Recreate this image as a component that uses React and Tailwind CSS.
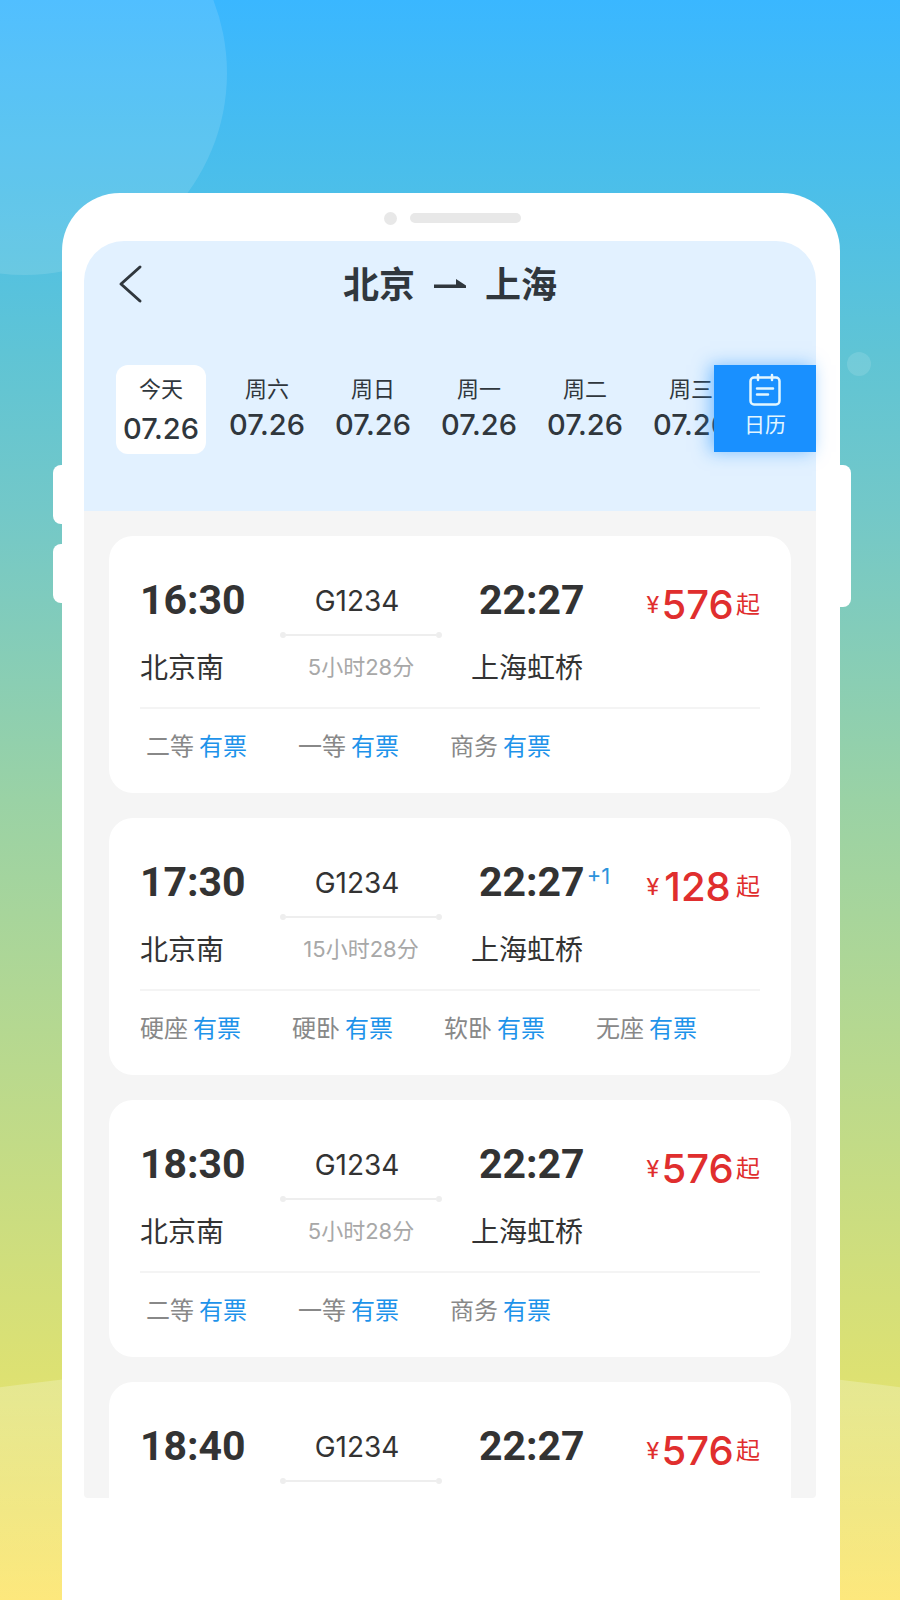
import React, { useState } from 'react';

const days = [
  { id: 1, label: '今天', date: '07.26' },
  { id: 2, label: '周六', date: '07.26' },
  { id: 3, label: '周日', date: '07.26' },
  { id: 4, label: '周一', date: '07.26' },
  { id: 5, label: '周二', date: '07.26' },
  { id: 6, label: '周三', date: '07.26' },
];

const fastSeats = ['二等', '一等', '商务'];
const slowSeats = ['硬座', '硬卧', '软卧', '无座'];

const trains = [
  { id: 1, depart: '16:30', arrive: '22:27', duration: '5小时28分', price: 576, seats: fastSeats },
  { id: 2, depart: '17:30', arrive: '22:27', nextDay: '+1', duration: '15小时28分', price: 128, seats: slowSeats },
  { id: 3, depart: '18:30', arrive: '22:27', duration: '5小时28分', price: 576, seats: fastSeats },
  { id: 4, depart: '18:40', arrive: '22:27', price: 576 },
];

const CalendarIcon = () => (
  <svg width="32" height="34" viewBox="0 0 32 34" fill="none" stroke="currentColor" strokeWidth="2.5" strokeLinecap="round" aria-hidden="true">
    <rect x="1.5" y="4.500" width="29" height="27" rx="3.500" />
    <path d="M9 2v5M23 2v5M8 15.500h16M8 21.500h11" />
  </svg>
);

const TrainCard = ({ train }) => (
  <article
    className={`bg-white px-[31px] pt-9 text-[#333333] ${
      train.seats ? 'rounded-3xl pb-[10px]' : 'rounded-t-3xl pb-2'
    }`}
  >
    <div className="grid grid-cols-[140px_162px_29px_1fr_auto]">
      <div className="flex h-[54px] items-center pt-1 font-[Roboto] text-[41px] font-bold">{train.depart}</div>
      <div className="flex h-[54px] items-center justify-center pt-1 pr-2 font-[Inter] text-[28px]">G1234</div>
      <div className="col-start-4 flex h-[54px] items-center pt-1 pl-2">
        <span className="font-[Roboto] text-[41px] font-bold">{train.arrive}</span>
        {train.nextDay && (
          <span className="self-start pl-[2px] font-[Inter] text-[22px] leading-9 text-[#2d93dc]">{train.nextDay}</span>
        )}
      </div>
      <div className="flex h-[54px] items-center pt-3 text-[#e02e2e]">
        <span className="font-[Roboto] text-2xl">¥</span>
        <span className="w-[77px] text-center font-[Inter] text-[40px] font-medium">{train.price}</span>
        <span className="text-2xl">起</span>
      </div>

      {/* Route line */}
      <div className="col-start-2 flex h-[18px] items-center">
        <span className="size-[6px] rounded-full bg-[#eeeeee]"></span>
        <span className="h-[2px] flex-1 bg-[#eeeeee]"></span>
        <span className="size-[6px] rounded-full bg-[#eeeeee]"></span>
      </div>

      {train.duration && (
        <>
          <div className="col-start-1 flex h-[46px] items-center pt-1 text-[28px]">北京南</div>
          <div className="flex h-[46px] items-center justify-center font-[Inter,'Noto_Sans_CJK_SC',sans-serif] text-[22px] text-[#a8a8a8]">
            {train.duration}
          </div>
          <div className="col-start-4 flex h-[46px] items-center pt-1 text-[28px]">上海虹桥</div>
        </>
      )}
    </div>

    {/* Seats */}
    {train.seats && (
      <ul
        className={`mt-[17px] flex h-[76px] items-center border-t-2 border-[#f4f4f4] pt-[2px] text-2xl ${
          train.seats.length < 4 ? 'pl-[6px]' : ''
        }`}
      >
        {train.seats.map((seat) => (
          <li key={seat} className="flex w-[152px] gap-[5px] text-[#888888]">
            {seat}
            <span className="text-[#1e93ea]">有票</span>
          </li>
        ))}
      </ul>
    )}
  </article>
);

const App = () => {
  const [selected, setSelected] = useState(1);

  return (
    <div className="relative flex min-h-screen flex-col overflow-hidden bg-linear-[180deg,#3ab7ff_0%,#4cbfe9_12%,#5fc4d5_22%,#73c8c8_32%,#9ad2a5_50%,#dde172_86%,#fde87c_100%] pt-[193px] font-['Liberation_Sans','Noto_Sans_CJK_SC',sans-serif]">
      {/* Background shapes */}
      <div className="absolute -top-[129px] -left-[177px] size-[404px] rounded-full bg-white/12"></div>
      <div className="absolute top-[352px] right-[29px] size-6 rounded-full bg-white/12"></div>
      <div className="absolute top-[1358px] -left-[75%] h-[700px] w-[250%] rounded-[50%] bg-linear-to-b from-white/25 to-transparent to-35%"></div>

      {/* Phone */}
      <div className="relative mr-[60px] ml-[62px] flex flex-1 flex-col rounded-t-[58px] bg-white pr-6 pl-[22px]">
        <div className="absolute top-[272px] -left-[9px] h-[59px] w-5 rounded-lg bg-white"></div>
        <div className="absolute top-[351px] -left-[9px] h-[59px] w-5 rounded-lg bg-white"></div>
        <div className="absolute top-[272px] -right-[11px] h-[142px] w-5 rounded-lg bg-white"></div>

        <div className="flex h-12 items-center justify-center gap-[13px] pt-[2px] pl-1">
          <span className="size-[13px] rounded-full bg-[#e8e8e8]"></span>
          <span className="h-[10px] w-[111px] rounded-full bg-[#e8e8e8]"></span>
        </div>

        <header className="h-[270px] rounded-t-[40px] bg-[#e2f1ff] text-[#30373d]">
          <div className="grid h-[86px] grid-cols-[64px_1fr_64px] items-center">
            <button type="button" aria-label="返回" className="flex justify-end">
              <svg width="30" height="40" viewBox="0 0 30 40" fill="none" stroke="currentColor" strokeWidth="3" strokeLinecap="round" strokeLinejoin="round">
                <path d="M22 3 3 20l19 17" />
              </svg>
            </button>
            <h1 className="flex items-center justify-center gap-[18px] pt-1 text-4xl font-bold">
              北京
              <svg width="34" height="14" viewBox="0 0 34 14" fill="currentColor" aria-hidden="true">
                <path d="M1 5.500H23V0L33 6.500V9H1Z" />
              </svg>
              上海
            </h1>
          </div>

          <div className="mt-[38px] flex">
            <div className="flex min-w-0 flex-1 gap-4 overflow-hidden pl-8">
              {days.map((day) => (
                <button
                  key={day.id}
                  type="button"
                  onClick={() => setSelected(day.id)}
                  className={`flex h-[89px] w-[90px] shrink-0 flex-col items-center rounded-xl pt-[9px] ${
                    selected === day.id ? 'gap-[5px] bg-white' : 'gap-px'
                  }`}
                >
                  <span className="text-[22px] leading-8">{day.label}</span>
                  <span className="font-[Inter] text-[29px] leading-9 font-medium">{day.date}</span>
                </button>
              ))}
            </div>
            <button
              type="button"
              className="flex h-[87px] w-[102px] flex-col items-center bg-[#1990ff] pt-2 text-[#e2f6ff] shadow-[-4px_0_16px_#1990ff80]"
            >
              <CalendarIcon />
              <span className="text-[21px] leading-9">日历</span>
            </button>
          </div>
        </header>

        <main className="flex flex-col gap-[25px] overflow-hidden rounded-b bg-[#f5f5f5] px-[25px] pt-[25px]">
          {trains.map((train) => (
            <TrainCard key={train.id} train={train} />
          ))}
        </main>
      </div>
    </div>
  );
};

export default App;
